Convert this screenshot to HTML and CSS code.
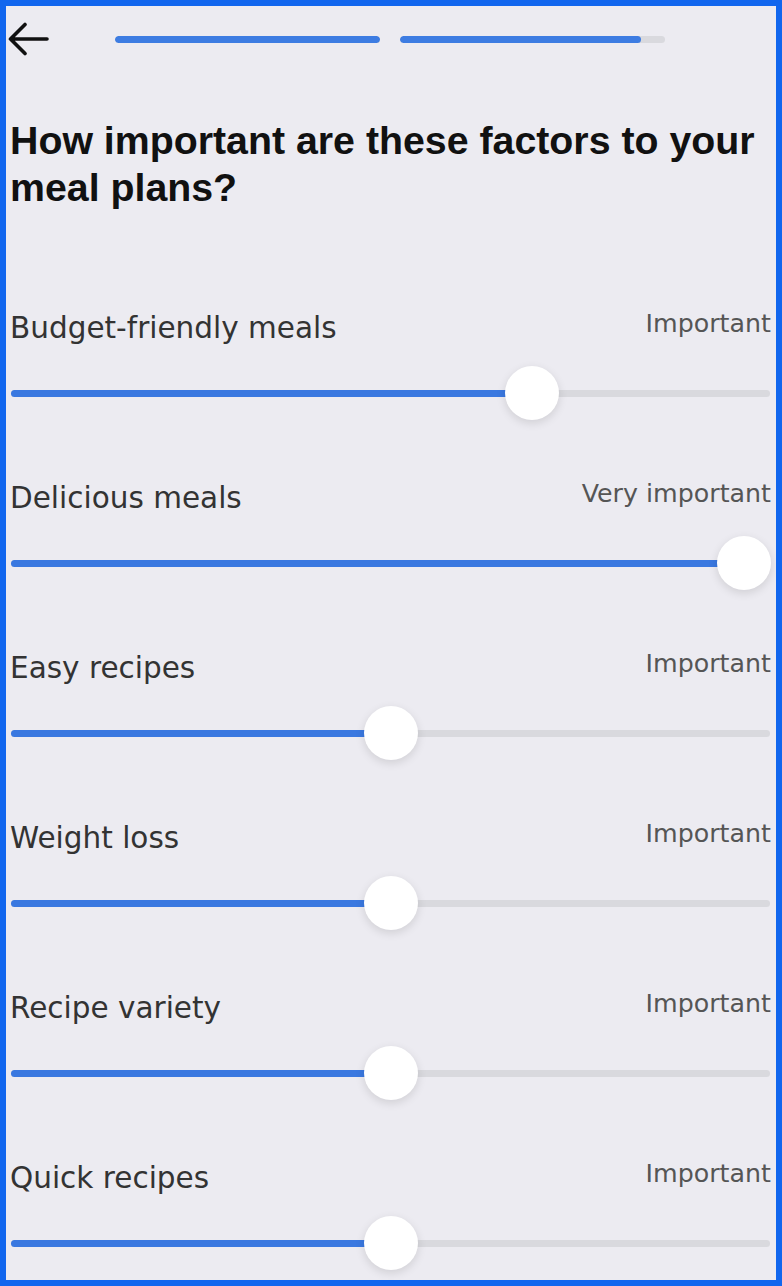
FILE: index.html
```html
<!DOCTYPE html>
<html lang="en">
<head>
  <meta charset="UTF-8" />
  <meta name="viewport" content="width=device-width, initial-scale=1.0" />
  <title>Meal plan preferences</title>
  <link rel="stylesheet" href="styles.css">
</head>
<body>
  <div class="screen">
    <div class="top-bar">
      <button class="back-btn" aria-label="Back">
        <svg width="42" height="36" viewBox="0 0 42 36">
          <path d="M2.5 18 H39 M17 3.5 L2.5 18 L17 32.5" fill="none" stroke="#111" stroke-width="3.6" stroke-linecap="round" stroke-linejoin="round"/>
        </svg>
      </button>
      <div class="steps">
        <div class="step"><div class="step-fill" style="width: 100%"></div></div>
        <div class="step"><div class="step-fill" style="width: 91%"></div></div>
      </div>
    </div>

    <h1 class="question">How important are these factors to your meal plans?</h1>

    <div class="factors">
      <div class="factor">
        <div class="factor-head">
          <span class="factor-name">Budget-friendly meals</span>
          <span class="factor-value">Important</span>
        </div>
        <div class="slider" style="--v: 0.7">
          <div class="track"></div>
          <div class="fill"></div>
          <div class="thumb"></div>
        </div>
      </div>

      <div class="factor">
        <div class="factor-head">
          <span class="factor-name">Delicious meals</span>
          <span class="factor-value">Very important</span>
        </div>
        <div class="slider" style="--v: 1">
          <div class="track"></div>
          <div class="fill"></div>
          <div class="thumb"></div>
        </div>
      </div>

      <div class="factor">
        <div class="factor-head">
          <span class="factor-name">Easy recipes</span>
          <span class="factor-value">Important</span>
        </div>
        <div class="slider" style="--v: 0.5">
          <div class="track"></div>
          <div class="fill"></div>
          <div class="thumb"></div>
        </div>
      </div>

      <div class="factor">
        <div class="factor-head">
          <span class="factor-name">Weight loss</span>
          <span class="factor-value">Important</span>
        </div>
        <div class="slider" style="--v: 0.5">
          <div class="track"></div>
          <div class="fill"></div>
          <div class="thumb"></div>
        </div>
      </div>

      <div class="factor">
        <div class="factor-head">
          <span class="factor-name">Recipe variety</span>
          <span class="factor-value">Important</span>
        </div>
        <div class="slider" style="--v: 0.5">
          <div class="track"></div>
          <div class="fill"></div>
          <div class="thumb"></div>
        </div>
      </div>

      <div class="factor">
        <div class="factor-head">
          <span class="factor-name">Quick recipes</span>
          <span class="factor-value">Important</span>
        </div>
        <div class="slider" style="--v: 0.5">
          <div class="track"></div>
          <div class="fill"></div>
          <div class="thumb"></div>
        </div>
      </div>
    </div>
  </div>
</body>
</html>
```

FILE: styles.css
```css
html, body {
  margin: 0;
  height: 100%;
}

body {
  background-color: #1166ee;
  font-family: 'DejaVu Sans', 'Liberation Sans', sans-serif;
  color: #333;
}

.screen {
  box-sizing: border-box;
  margin: 6px;
  height: 1274px;
  padding: 0 5px 0 4px;
  background-color: #ecebf1;
  overflow: hidden;
}

.top-bar {
  display: flex;
  align-items: center;
  height: 66px;
}

.back-btn {
  display: flex;
  padding: 0;
  margin-left: -2px;
  border: none;
  background: none;
}

.steps {
  display: flex;
  gap: 20px;
  margin-left: 65px;
}

.step {
  width: 265px;
  height: 7px;
  border-radius: 4px;
  background-color: #d9d9de;
  overflow: hidden;
}

.step-fill {
  height: 100%;
  border-radius: 4px;
  background-color: #3d7ce2;
}

.question {
  margin: 45px 0 0;
  font-family: 'Liberation Sans', Arial, sans-serif;
  font-size: 39.3px;
  line-height: 47px;
  font-weight: 700;
  color: #111;
}

.factors {
  display: flex;
  flex-direction: column;
  gap: 59px;
  margin-top: 100px;
}

.factor-head {
  display: flex;
  justify-content: space-between;
  align-items: flex-start;
  height: 34px;
}

.factor-name {
  font-size: 29.5px;
  line-height: 34px;
  color: #333;
}

.factor-value {
  font-size: 25.3px;
  line-height: 26px;
  color: #555;
}

.slider {
  position: relative;
  height: 56px;
  margin-top: 21px;
}

.track,
.fill {
  position: absolute;
  top: 24px;
  height: 7px;
  border-radius: 4px;
}

.track {
  left: 1px;
  right: 1px;
  background-color: #d9d9de;
}

.fill {
  left: 1px;
  width: calc(27px + var(--v) * (100% - 54px));
  background-color: #3a78e0;
}

.thumb {
  position: absolute;
  top: 0;
  left: calc(var(--v) * (100% - 54px));
  width: 54px;
  height: 54px;
  border-radius: 50%;
  background-color: #fff;
  box-shadow: 0 3px 10px rgba(0, 0, 0, 0.12);
}
```
